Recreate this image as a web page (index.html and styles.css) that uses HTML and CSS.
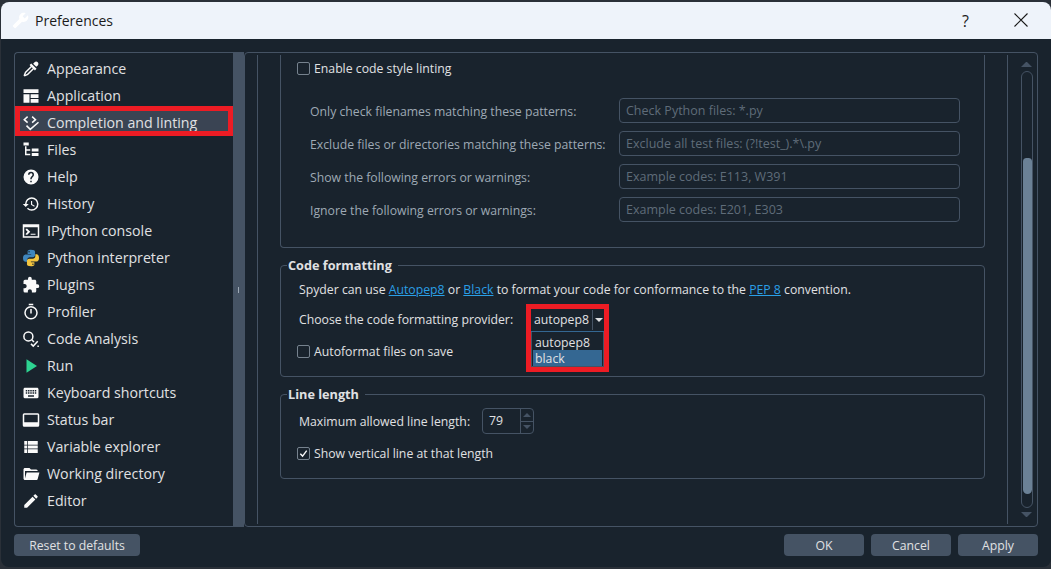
FILE: index.html
```html
<!DOCTYPE html>
<html lang="en">
<head>
<meta charset="utf-8">
<title>Preferences</title>
<link rel="stylesheet" href="styles.css">
</head>
<body>
<div class="window">
  <header class="titlebar">
    <svg class="title-icon" viewBox="0 0 24 24"><path d="M1.3,19L10.4,9.9C9.5,7.6 10,4.9 11.9,3C13.9,1 16.9,.6 19.3,1.7L15,6L18,9L22.4,4.7C23.6,7.1 23.1,10.1 21.1,12.1C19.2,14 16.5,14.5 14.2,13.6L5.1,22.7C4.7,23.1 4.1,23.1 3.7,22.7L1.4,20.4C.9,20 .9,19.3 1.3,19Z"/></svg>
    <span class="title-text">Preferences</span>
    <span class="title-help">?</span>
    <svg class="title-close" viewBox="0 0 14 14"><path d="M.5,.5L13.5,13.5M13.5,.5L.5,13.5"/></svg>
  </header>

  <div class="content">
    <div class="main">
      <nav class="list">
        <div class="item"><svg class="icon" viewBox="0 0 24 24"><path d="M19.35,11.72L17.22,13.85L15.81,12.43L8.1,20.14L3.5,22L2,20.5L3.86,15.9L11.57,8.19L10.15,6.78L12.28,4.65L19.35,11.72M16.76,3C17.93,1.83 19.83,1.83 21,3C22.17,4.17 22.17,6.07 21,7.24L19.08,9.16L14.84,4.92L16.76,3M5.56,17.03L4.5,19.5L6.97,18.44L14.4,11L13,9.6L5.56,17.03Z"/></svg>Appearance</div>
        <div class="item"><svg class="icon" viewBox="0 0 24 24"><path d="M2,3H22V8H2ZM2,9.5H10V21H2ZM11.5,9.5H22V14.5H11.5ZM11.5,16H22V21H11.5Z"/></svg>Application</div>
        <div class="item item-selected"><svg class="icon icon-stroke" viewBox="0 0 24 24"><path d="M7.5,3.5L3,7.5L7.5,11.5M13.5,3.5L18,7.5L13.5,11.5M6,15.5L11,20.5L22,11"/></svg>Completion and linting</div>
        <div class="item"><svg class="icon" viewBox="0 0 24 24"><path d="M2,2H9V6H2ZM4,7H6V19H4ZM5,11H11V13H5ZM5,17H11V19H5ZM13,10H22V14H13ZM13,16H22V20H13Z"/></svg>Files</div>
        <div class="item"><svg class="icon" viewBox="0 0 24 24"><path d="M15.07,11.25L14.17,12.17C13.45,12.89 13,13.5 13,15H11V14.5C11,13.39 11.45,12.39 12.17,11.67L13.41,10.41C13.78,10.05 14,9.55 14,9C14,7.89 13.1,7 12,7A2,2 0 0,0 10,9H8A4,4 0 0,1 12,5A4,4 0 0,1 16,9C16,9.88 15.64,10.67 15.07,11.25M13,19H11V17H13M12,2A10,10 0 0,0 2,12A10,10 0 0,0 12,22A10,10 0 0,0 22,12C22,6.47 17.5,2 12,2Z"/></svg>Help</div>
        <div class="item"><svg class="icon" viewBox="0 0 24 24"><path d="M13.5,8H12V13L16.28,15.54L17,14.33L13.5,12.25V8M13,3A9,9 0 0,0 4,12H1L4.96,16.03L9,12H6A7,7 0 0,1 13,5A7,7 0 0,1 20,12A7,7 0 0,1 13,19C11.07,19 9.32,18.21 8.06,16.94L6.64,18.36C8.27,20 10.5,21 13,21A9,9 0 0,0 22,12A9,9 0 0,0 13,3"/></svg>History</div>
        <div class="item"><svg class="icon" viewBox="0 0 24 24"><path fill-rule="evenodd" d="M1,3H23V21H1ZM3,7V19H21V7ZM5,9L7,9L11,13L7,17L5,17L5,15.5L7.5,13L5,10.5ZM11.5,15.5H18V17H11.5Z"/></svg>IPython console</div>
        <div class="item"><svg class="icon" viewBox="0 0 24 24"><path class="py-blue" d="M11.9,1C7.5,1 7.5,2.9 7.5,3.7V6.5H12.2V7.2H5.2C3.2,7.2 1.3,8.6 1.3,12.1C1.3,15.9 3,17 5,17H7V14.3C7,12.4 8.6,10.9 10.4,10.9H14.7C16.2,10.9 17.4,9.6 17.4,8.1V3.7C17.4,2.2 16,1 11.9,1ZM9.4,2.6A1,1 0 1,1 9.4,4.6A1,1 0 1,1 9.4,2.6Z"/><path class="py-yellow" d="M12.1,23C16.5,23 16.5,21.1 16.5,20.3V17.5H11.8V16.8H18.8C20.8,16.8 22.7,15.4 22.7,11.9C22.7,8.1 21,7 19,7H17.8V9.7C17.8,11.6 16.2,13.1 14.4,13.1H9.3C7.8,13.1 6.6,14.4 6.6,15.9V20.3C6.6,21.8 8,23 12.1,23ZM14.6,21.4A1,1 0 1,1 14.6,19.4A1,1 0 1,1 14.6,21.4Z"/></svg>Python interpreter</div>
        <div class="item"><svg class="icon" viewBox="0 0 24 24"><path d="M20.5,11H19V7C19,5.89 18.1,5 17,5H13V3.5A2.5,2.5 0 0,0 10.5,1A2.5,2.5 0 0,0 8,3.5V5H4A2,2 0 0,0 2,7V10.8H3.5C5,10.8 6.2,12 6.2,13.5C6.2,15 5,16.2 3.5,16.2H2V20A2,2 0 0,0 4,22H7.8V20.5C7.8,19 9,17.8 10.5,17.8C12,17.8 13.2,19 13.2,20.5V22H17A2,2 0 0,0 19,20V16H20.5A2.5,2.5 0 0,0 23,13.5A2.5,2.5 0 0,0 20.5,11Z"/></svg>Plugins</div>
        <div class="item"><svg class="icon" viewBox="0 0 24 24"><path d="M12,20A7,7 0 0,1 5,13A7,7 0 0,1 12,6A7,7 0 0,1 19,13A7,7 0 0,1 12,20M12,4A9,9 0 0,0 3,13A9,9 0 0,0 12,22A9,9 0 0,0 21,13A9,9 0 0,0 12,4M11,14H13V8H11M15,1H9V3H15V1Z"/></svg>Profiler</div>
        <div class="item"><svg class="icon icon-stroke" viewBox="0 0 24 24"><circle cx="8.5" cy="8.5" r="6"/><path d="M13,13L16,16M12,18.5L15,21.5L21,15M21.5,20.5V22.5"/></svg>Code Analysis</div>
        <div class="item"><svg class="icon icon-run" viewBox="0 0 24 24"><path d="M6,3L20,12L6,21Z"/></svg>Run</div>
        <div class="item"><svg class="icon" viewBox="0 0 24 24"><path d="M19,10H17V8H19M19,13H17V11H19M16,10H14V8H16M16,13H14V11H16M16,17H8V15H16M7,10H5V8H7M7,13H5V11H7M8,11H10V13H8M8,8H10V10H8M11,11H13V13H11M11,8H13V10H11M20,5H4C2.89,5 2,5.89 2,7V17A2,2 0 0,0 4,19H20A2,2 0 0,0 22,17V7C22,5.89 21.1,5 20,5Z"/></svg>Keyboard shortcuts</div>
        <div class="item"><svg class="icon" viewBox="0 0 24 24"><path fill-rule="evenodd" d="M3,3H21A2,2 0 0,1 23,5V19A2,2 0 0,1 21,21H3A2,2 0 0,1 1,19V5A2,2 0 0,1 3,3ZM3,5V15H21V5Z"/></svg>Status bar</div>
        <div class="item"><svg class="icon" viewBox="0 0 24 24"><path d="M3,4H7V9H3ZM8,4H21V9H8ZM3,10H7V14H3ZM8,10H21V14H8ZM3,15H7V20H3ZM8,15H21V20H8Z"/></svg>Variable explorer</div>
        <div class="item"><svg class="icon" viewBox="0 0 24 24"><path d="M19,20H4C2.89,20 2,19.1 2,18V6C2,4.89 2.89,4 4,4H10L12,6H19A2,2 0 0,1 21,8H21L4,8V18L6.14,10H23.21L20.93,18.5C20.7,19.37 19.92,20 19,20Z"/></svg>Working directory</div>
        <div class="item"><svg class="icon" viewBox="0 0 24 24"><path d="M20.71,7.04C21.1,6.65 21.1,6 20.71,5.63L18.37,3.29C18,2.9 17.35,2.9 16.96,3.29L15.12,5.12L18.87,8.87M3,17.25V21H6.75L17.81,9.93L14.06,6.18L3,17.25Z"/></svg>Editor</div>
      </nav>

      <div class="splitter"><span class="grip"></span></div>

      <section class="panel">
        <div class="scroll-frame">
          <div class="group group-clipped">
            <label class="check-row check-first"><span class="checkbox"></span>Enable code style linting</label>
            <div class="pattern-grid">
              <span class="dim">Only check filenames matching these patterns:</span>
              <div class="field">Check Python files: *.py</div>
              <span class="dim">Exclude files or directories matching these patterns:</span>
              <div class="field">Exclude all test files: (?!test_).*\.py</div>
              <span class="dim">Show the following errors or warnings:</span>
              <div class="field">Example codes: E113, W391</div>
              <span class="dim">Ignore the following errors or warnings:</span>
              <div class="field">Example codes: E201, E303</div>
            </div>
          </div>

          <div class="group group-format">
            <div class="group-title">Code formatting</div>
            <p class="line">Spyder can use <a class="link">Autopep8</a> or <a class="link">Black</a> to format your code for conformance to the <a class="link">PEP 8</a> convention.</p>
            <div class="provider-row">
              <span class="provider-label">Choose the code formatting provider:</span>
              <div class="combo">
                <span class="combo-value">autopep8</span>
                <span class="combo-arrow"><span class="caret"></span></span>
                <div class="popup">
                  <div class="popup-item">autopep8</div>
                  <div class="popup-item popup-active">black</div>
                </div>
                <div class="annotation"></div>
              </div>
            </div>
            <label class="check-row check-autoformat"><span class="checkbox"></span>Autoformat files on save</label>
          </div>

          <div class="group group-length">
            <div class="group-title">Line length</div>
            <div class="length-row">
              <span class="length-label">Maximum allowed line length:</span>
              <div class="spin">
                <span class="spin-value">79</span>
                <span class="spin-buttons">
                  <span class="spin-btn"><span class="tri tri-up"></span></span>
                  <span class="spin-btn"><span class="tri tri-down"></span></span>
                </span>
              </div>
            </div>
            <label class="check-row check-vertical"><span class="checkbox checkbox-on"><svg viewBox="0 0 12 12"><path d="M2.5,6.2L5,8.8L9.5,2.8"/></svg></span>Show vertical line at that length</label>
          </div>
        </div>

        <div class="scrollbar">
          <span class="sb-arrow sb-up"></span>
          <div class="sb-track"><div class="sb-handle"></div></div>
          <span class="sb-arrow sb-down"></span>
        </div>
      </section>
    </div>

    <footer class="footer">
      <button class="btn btn-reset">Reset to defaults</button>
      <span class="footer-space"></span>
      <button class="btn">OK</button>
      <button class="btn">Cancel</button>
      <button class="btn">Apply</button>
    </footer>
  </div>
</div>
</body>
</html>
```
FILE: styles.css
```css
* { box-sizing: border-box; }
html, body { margin: 0; height: 100%; background: #2a3038; overflow: hidden; }
body { font-family: "Open Sans", "Noto Sans", sans-serif; font-size: 12.25px; color: #e0e1e3; padding: 2px 0 2px 1px; }

.window { height: 565px; border-radius: 8px; background: #19232d; overflow: hidden; display: flex; flex-direction: column; }

.titlebar { height: 37px; background: #eef3fa; display: flex; align-items: center; padding-left: 11px; color: #1b1b1b; flex: none; }
.title-icon { width: 17px; height: 17px; fill: #fff; }
.title-text { font-size: 14px; margin-left: 6px; flex: 1; }
.title-help { font-size: 16px; width: 10px; margin-right: 42px; }
.title-close { width: 14px; height: 14px; fill: none; stroke: #1b1b1b; stroke-width: 1.1; margin: 0 23px 2px 0; }

.content { flex: 1; display: flex; flex-direction: column; padding: 13px 13px 11px; min-height: 0; }
.main { height: 475px; display: flex; flex: none; }

.list { width: 219px; border: 1px solid #455364; border-right: none; border-radius: 4px 0 0 4px; padding-top: 2px; flex: none; }
.item { height: 27px; display: flex; align-items: center; gap: 7px; padding-left: 7px; font-size: 14.2px; color: #e0e1e3; position: relative; }
.item-selected { background: #3a4453; }
.item-selected::after { content: ""; position: absolute; left: 0; right: 0; top: -3px; bottom: 0; border: 5px solid #ed1c24; }
.icon { width: 18px; height: 18px; fill: #fafafa; flex: none; }
.icon-stroke { fill: none; stroke: #fafafa; stroke-width: 2; }
.icon-run { fill: #2dd391; }
.py-blue { fill: #3f86bd; }
.py-yellow { fill: #f4c53f; }

.splitter { width: 11px; background: #455364; display: flex; align-items: center; justify-content: center; flex: none; }
.grip { width: 1px; height: 6px; background: #9da9b5; }

.panel { flex: 1; display: flex; border: 1px solid #455364; border-radius: 4px; padding: 2px 0 2px 12px; min-width: 0; }
.scroll-frame { width: 751px; border-left: 1px solid #455364; border-right: 1px solid #455364; padding-left: 22px; flex: none; }

.group { width: 705px; border: 1px solid #455364; border-radius: 4px; padding-left: 18px; }
.group-clipped { height: 193px; border-top: none; border-radius: 0 0 4px 4px; padding: 4px 0 0 16px; }
.group-format { height: 112px; margin-top: 17px; }
.group-length { height: 85px; margin-top: 17px; }
.group-title { font-weight: 700; font-size: 12.7px; line-height: 16px; height: 16px; margin: -9px 0 0 -12px; padding: 0 6px 0 1px; background: #19232d; width: fit-content; }

.check-row { display: flex; align-items: center; height: 18px; gap: 4px; }
.check-autoformat { margin: 10px 0 0 -2px; }
.check-vertical { margin: 10px 0 0 -2px; }
.checkbox { width: 13px; height: 13px; border: 1px solid #76828e; border-radius: 2px; display: block; flex: none; }
.checkbox-on svg { display: block; width: 11px; height: 11px; fill: none; stroke: #fafafa; stroke-width: 1.5; }

.pattern-grid { display: grid; grid-template-columns: 309px 341px; row-gap: 8px; margin: 21px 0 0 13px; align-items: center; }
.dim { color: #9ea9b4; padding-top: 1px; }
.field { height: 25px; border: 1px solid #455364; border-radius: 4px; padding-left: 6px; line-height: 24px; font-size: 12.5px; color: #5f6c79; }

.line { margin: 8px 0 0; line-height: 18px; height: 18px; }
.link { color: #2a9fe6; text-decoration: underline; }

.provider-row { display: flex; align-items: center; height: 25px; margin-top: 8px; }
.provider-label { width: 232px; flex: none; }
.combo { width: 73px; height: 25px; border-bottom: 1px solid #346792; display: flex; position: relative; }
.combo-value { flex: 1; padding-left: 3px; line-height: 25px; }
.combo-arrow { width: 12px; border-left: 1px solid #455364; display: flex; align-items: center; justify-content: center; margin: 3px 0 1px; }
.caret { border: 4px solid transparent; border-top: 4px solid #e0e1e3; border-bottom: none; margin-left: 1px; }
.popup { position: absolute; left: 0; top: 25px; width: 73px; height: 35px; background: #19232d; border: 1px solid #455364; border-top: none; padding: 2px 1px 1px; }
.popup-item { height: 16px; line-height: 18px; padding-left: 2px; }
.popup-active { background: #346792; }
.annotation { position: absolute; left: -5px; top: -3px; width: 83px; height: 68px; border: 5px solid #ed1c24; }

.length-row { display: flex; align-items: center; height: 26px; margin-top: 6px; }
.length-label { width: 183px; flex: none; }
.spin { width: 52px; height: 26px; border: 1px solid #455364; border-radius: 4px; display: flex; }
.spin-value { flex: 1; padding-left: 6px; line-height: 24px; }
.spin-buttons { width: 13px; border-left: 1px solid #455364; display: flex; flex-direction: column; }
.spin-btn { flex: 1; display: flex; align-items: center; justify-content: center; }
.spin-btn + .spin-btn { border-top: 1px solid #455364; }
.tri { border: 4px solid transparent; }
.tri-up { border-top: none; border-bottom: 4px solid #455364; }
.tri-down { border-bottom: none; border-top: 4px solid #455364; }

.scrollbar { flex: 1; padding: 7px 0 0 13px; display: flex; flex-direction: column; }
.sb-arrow { width: 11px; border: 5.5px solid transparent; flex: none; }
.sb-up { border-top: none; border-bottom: 5px solid #455364; margin-bottom: 4px; }
.sb-down { border-bottom: none; border-top: 5px solid #455364; margin-top: 4px; }
.sb-track { width: 12px; height: 437px; border: 1px solid #455364; border-radius: 6px; padding: 86px 0 13px; }
.sb-handle { height: 100%; width: 9px; margin: 0 auto; background: #6b8196; border-radius: 4px 4px 5px 5px; }

.footer { display: flex; gap: 7px; margin-top: 7px; height: 22px; flex: none; }
.footer-space { flex: 1; }
.btn { width: 80px; height: 22px; border: none; border-radius: 4px; background: #455364; color: #e0e1e3; font: inherit; padding: 0; }
.btn-reset { width: 126px; }
```
